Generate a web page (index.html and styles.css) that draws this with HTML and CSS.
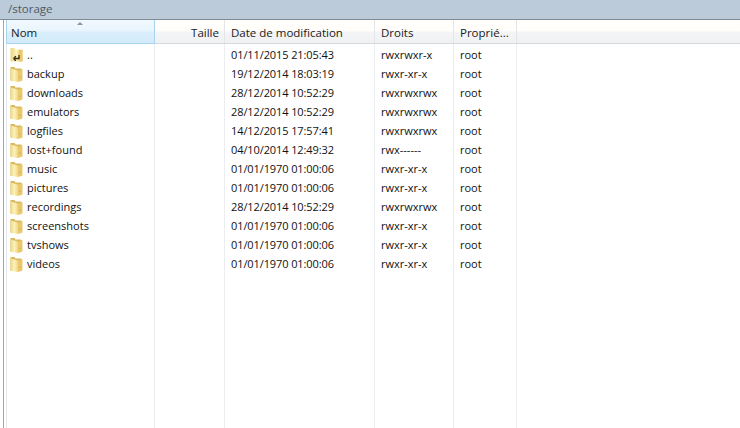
FILE: index.html
```html
<!DOCTYPE html>
<html lang="fr">
<head>
<meta charset="utf-8">
<title>/storage</title>
<link rel="stylesheet" href="styles.css">
</head>
<body>
<svg class="defs" width="0" height="0" aria-hidden="true">
  <defs>
    <linearGradient id="fold" x1="0" y1="0" x2="1" y2="0">
      <stop offset="0" stop-color="#eed680"/>
      <stop offset=".5" stop-color="#fbf2bd"/>
      <stop offset="1" stop-color="#f0d680"/>
    </linearGradient>
    <symbol id="folder" viewBox="0 0 13 16">
      <path d="M.5 1h4l1 1.5h5.5l1 1V14.5H.5z" fill="#d9b95e"/>
      <path d="M.5 2.5 8 4.5V16L.5 14.8z" fill="url(#fold)"/>
      <path d="M8 4.5 12.5 3.5V14.5L8 16z" fill="#e9c870"/>
      <path d="M10 10.5v1.5" stroke="#b9a363" stroke-width=".8"/>
    </symbol>
    <symbol id="folder-up" viewBox="0 0 13 16">
      <path d="M.5 1h4l1 1.5h7V14.5H.5z" fill="url(#fold)"/>
      <path d="M8.5 3h4V14.5H8.5z" fill="#e9c870"/>
      <path d="M9 8v3.5H3.5M3.5 11.5l2.4-2.4M3.5 11.5l2.4 2.4" fill="none" stroke="#33290e" stroke-width="1.3"/>
    </symbol>
  </defs>
</svg>
<div class="path">/storage</div>
<div class="pane">
  <div class="head">
    <div class="hc c-name active"><span class="sort"></span>Nom</div>
    <div class="hc c-size">Taille</div>
    <div class="hc c-date">Date de modification</div>
    <div class="hc c-perm">Droits</div>
    <div class="hc c-own">Proprié...</div>
    <div class="hc c-fill"></div>
  </div>
  <div class="table">
    <div class="rows">
      <div class="row"><div class="c-name cell"><svg class="ico"><use href="#folder-up"/></svg>..</div><div class="c-size"></div><div class="c-date cell">01/11/2015 21:05:43</div><div class="c-perm cell">rwxrwxr-x</div><div class="c-own cell">root</div></div>
      <div class="row"><div class="c-name cell"><svg class="ico"><use href="#folder"/></svg>backup</div><div class="c-size"></div><div class="c-date cell">19/12/2014 18:03:19</div><div class="c-perm cell">rwxr-xr-x</div><div class="c-own cell">root</div></div>
      <div class="row"><div class="c-name cell"><svg class="ico"><use href="#folder"/></svg>downloads</div><div class="c-size"></div><div class="c-date cell">28/12/2014 10:52:29</div><div class="c-perm cell">rwxrwxrwx</div><div class="c-own cell">root</div></div>
      <div class="row"><div class="c-name cell"><svg class="ico"><use href="#folder"/></svg>emulators</div><div class="c-size"></div><div class="c-date cell">28/12/2014 10:52:29</div><div class="c-perm cell">rwxrwxrwx</div><div class="c-own cell">root</div></div>
      <div class="row"><div class="c-name cell"><svg class="ico"><use href="#folder"/></svg>logfiles</div><div class="c-size"></div><div class="c-date cell">14/12/2015 17:57:41</div><div class="c-perm cell">rwxrwxrwx</div><div class="c-own cell">root</div></div>
      <div class="row"><div class="c-name cell"><svg class="ico"><use href="#folder"/></svg>lost+found</div><div class="c-size"></div><div class="c-date cell">04/10/2014 12:49:32</div><div class="c-perm cell">rwx------</div><div class="c-own cell">root</div></div>
      <div class="row"><div class="c-name cell"><svg class="ico"><use href="#folder"/></svg>music</div><div class="c-size"></div><div class="c-date cell">01/01/1970 01:00:06</div><div class="c-perm cell">rwxr-xr-x</div><div class="c-own cell">root</div></div>
      <div class="row"><div class="c-name cell"><svg class="ico"><use href="#folder"/></svg>pictures</div><div class="c-size"></div><div class="c-date cell">01/01/1970 01:00:06</div><div class="c-perm cell">rwxr-xr-x</div><div class="c-own cell">root</div></div>
      <div class="row"><div class="c-name cell"><svg class="ico"><use href="#folder"/></svg>recordings</div><div class="c-size"></div><div class="c-date cell">28/12/2014 10:52:29</div><div class="c-perm cell">rwxrwxrwx</div><div class="c-own cell">root</div></div>
      <div class="row"><div class="c-name cell"><svg class="ico"><use href="#folder"/></svg>screenshots</div><div class="c-size"></div><div class="c-date cell">01/01/1970 01:00:06</div><div class="c-perm cell">rwxr-xr-x</div><div class="c-own cell">root</div></div>
      <div class="row"><div class="c-name cell"><svg class="ico"><use href="#folder"/></svg>tvshows</div><div class="c-size"></div><div class="c-date cell">01/01/1970 01:00:06</div><div class="c-perm cell">rwxr-xr-x</div><div class="c-own cell">root</div></div>
      <div class="row"><div class="c-name cell"><svg class="ico"><use href="#folder"/></svg>videos</div><div class="c-size"></div><div class="c-date cell">01/01/1970 01:00:06</div><div class="c-perm cell">rwxr-xr-x</div><div class="c-own cell">root</div></div>
    </div>
  </div>
</div>
</body>
</html>
```
FILE: styles.css
```css
* { box-sizing: border-box; }
html, body { margin: 0; padding: 0; height: 100%; overflow: hidden; }
body {
  width: 740px; height: 428px; background: #fff;
  font-family: "Open Sans", "Noto Sans", sans-serif; font-size: 11px; color: #111;
  display: flex; flex-direction: column;
}
.defs { position: absolute; }
.path {
  height: 20px; background: #bccbd9; border-bottom: 1px solid #7f8c96;
  padding-left: 8px; line-height: 18px; color: #4d5a66; font-size: 11.5px; flex: none;
}
.pane {
  flex: 1; display: flex; flex-direction: column; min-height: 0;
  margin-left: 3px; border-left: 1px solid #9fa6b0; background: #fff;
  padding-left: 2px;
}
.head {
  display: flex; height: 24px; flex: none;
  background: linear-gradient(#fffefb 0, #fffefb 45%, #f3f4f6 55%, #f0f1f3 100%);
  border-bottom: 1px solid #d5d7da;
}
.hc {
  position: relative; line-height: 25px; border-right: 1px solid #e3e5e8; height: 23px;
  color: #1a1a1a; font-size: 11.5px;
}
.c-name { width: 149px; flex: none; }
.c-size { width: 70px; flex: none; padding-right: 5px; text-align: right; }
.c-date { width: 150px; flex: none; padding-left: 6px; }
.c-date.cell { letter-spacing: -0.1px; }
.c-perm { width: 79px; flex: none; padding-left: 6px; }
.c-own { width: 63px; flex: none; padding-left: 6px; }
.c-fill { flex: 1; border-right: 0; }
.active {
  background: linear-gradient(#f2f9fe 0, #e9f5fd 45%, #d9eefb 55%, #d3ebfa 100%);
  border: 1px solid #a9d4ee; border-top: 0; height: 24px;
  padding-left: 4px;
}
.sort {
  position: absolute; top: 2px; left: 70px; width: 0; height: 0;
  border-left: 3px solid transparent; border-right: 3px solid transparent;
  border-bottom: 3px solid #8a939d;
}
.table {
  flex: 1; min-height: 0; padding-top: 1px;
  background: linear-gradient(#e6e9ee, #e6e9ee) 0 0 / 1px 100% no-repeat,
              linear-gradient(#ebedf0, #ebedf0) 148px 0 / 1px 100% no-repeat,
              linear-gradient(#ebedf0, #ebedf0) 218px 0 / 1px 100% no-repeat,
              linear-gradient(#ebedf0, #ebedf0) 368px 0 / 1px 100% no-repeat,
              linear-gradient(#ebedf0, #ebedf0) 447px 0 / 1px 100% no-repeat,
              linear-gradient(#ebedf0, #ebedf0) 510px 0 / 1px 100% no-repeat;
}
.row { display: flex; height: 19px; align-items: center; }
.cell { white-space: nowrap; display: flex; align-items: center; }
.c-name.cell { padding-left: 4px; gap: 4px; }
.ico { width: 13px; height: 16px; flex: none; }
```
